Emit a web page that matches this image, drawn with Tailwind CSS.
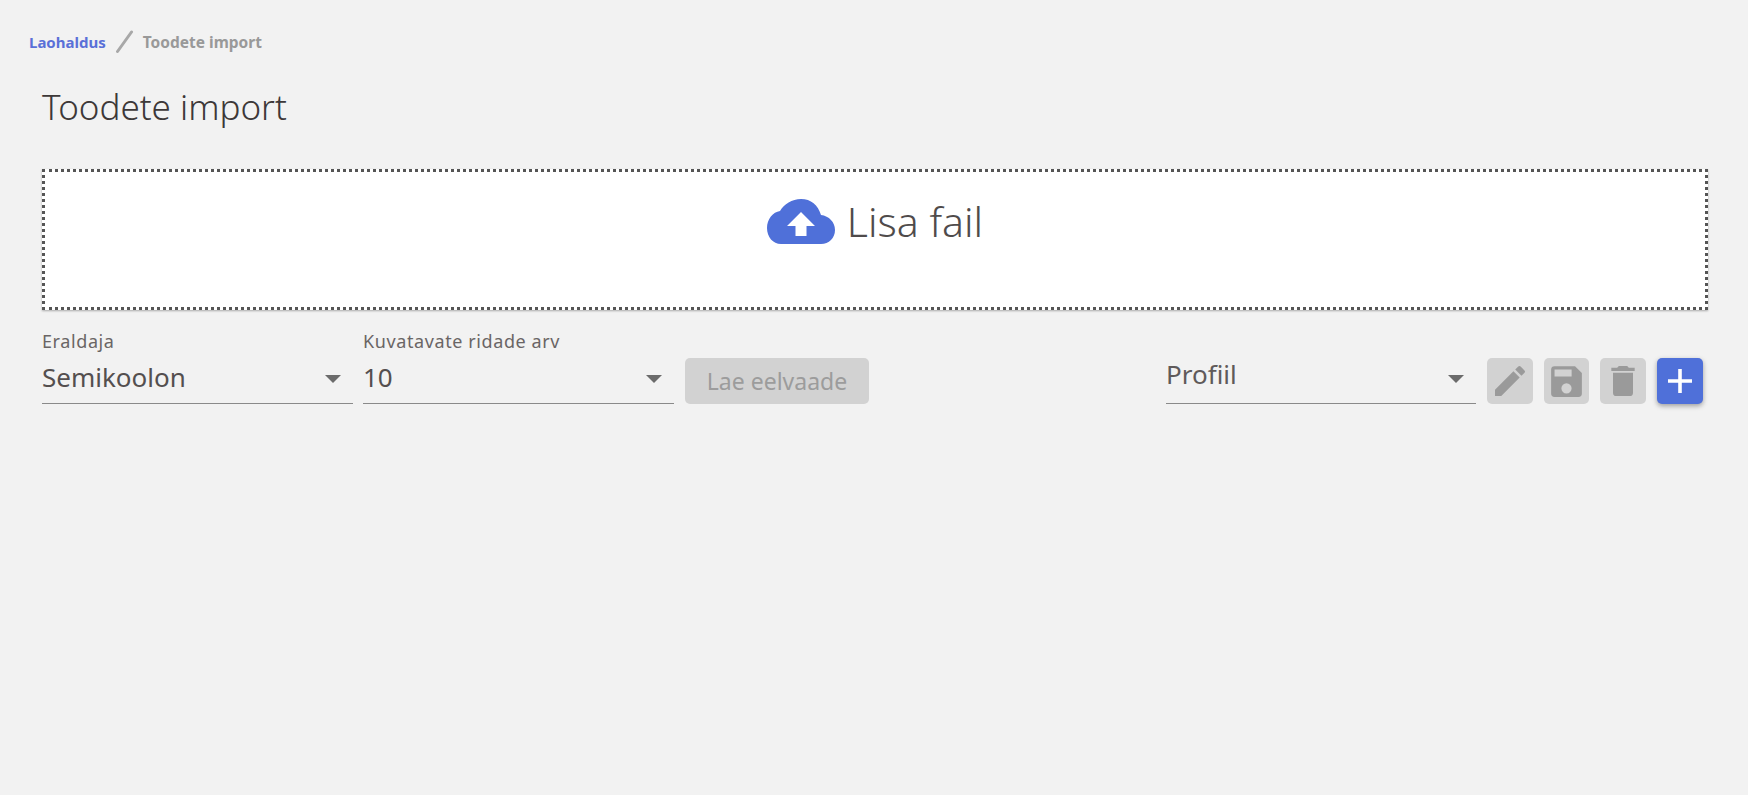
<!DOCTYPE html>
<html lang="et">
  <head>
    <meta charset="UTF-8" />
    <title>Toodete import</title>
    <script src="https://cdn.jsdelivr.net/npm/@tailwindcss/browser@4"></script>
  </head>
  <body class="h-[795px] overflow-hidden bg-[#f2f2f2] font-['Noto_Sans',sans-serif] text-[#544f4f]">
    <!-- Breadcrumb -->
    <nav class="mt-[30px] flex h-[24px] items-center pl-[29px] text-[15px] font-bold">
      <a class="text-[#5a70d8]">Laohaldus</a>
      <svg class="mr-[9px] ml-[10px] h-[24px] w-[18px]" viewBox="0 0 18 24"><path d="M1.500 21.500 L15.500 2" stroke="#a8a8a8" stroke-width="3" stroke-linecap="round" fill="none" /></svg>
      <span class="mt-[2px] text-[15.500px] text-[#999999]">Toodete import</span>
    </nav>

    <main class="pr-[40px] pl-[42px]">
      <h1 class="mt-[24px] h-[58px] text-[35px] leading-[58px] font-light text-[#3d3838]">Toodete import</h1>

      <!-- Upload area -->
      <div class="mt-[33px] flex h-[141px] justify-center border-[3px] border-dotted border-[#555555] bg-white pt-[27px] shadow-[0_1px_2px_rgba(0,0,0,0.3)]">
        <div class="flex h-[45px] items-center gap-[12px]">
          <svg class="h-[45px] w-[68px]" viewBox="0 0 68 45">
            <path fill="#4f70d9" d="M14 45 C6 45 0 38 0 29 C0 20 6 13 13 12 C17 5 25 0 34 0 C44 0 51 6 54 16 C62 17 68 23 68 31 C68 39 62 45 54 45 Z" />
            <path fill="#ffffff" d="M34 13 L48 27 L39.500 27 L39.500 37 L28.500 37 L28.500 27 L20 27 Z" />
          </svg>
          <span class="text-[41px] leading-[45px] font-light text-[#4f4b4b]">Lisa fail</span>
        </div>
      </div>

      <!-- Import options -->
      <div class="mt-[19px] flex items-start pr-[5px]">
        <div class="relative h-[75px] w-[311px] border-b border-[#8a8a8a]">
          <label class="block text-[18px] leading-[24px] tracking-[0.6px] text-[#6a6565]">Eraldaja</label>
          <div class="mt-[7px] text-[26px] leading-[34px]">Semikoolon</div>
          <span class="absolute top-[46px] right-[12px] h-0 w-0 border-x-[8px] border-t-[8px] border-x-transparent border-t-[#6b6b6b]"></span>
        </div>
        <div class="relative ml-[10px] h-[75px] w-[311px] border-b border-[#8a8a8a]">
          <label class="block text-[18px] leading-[24px] tracking-[0.6px] text-[#6a6565]">Kuvatavate ridade arv</label>
          <div class="mt-[7px] text-[26px] leading-[34px]">10</div>
          <span class="absolute top-[46px] right-[12px] h-0 w-0 border-x-[8px] border-t-[8px] border-x-transparent border-t-[#6b6b6b]"></span>
        </div>
        <button class="mt-[29px] ml-[11px] h-[46px] w-[184px] rounded-[5px] bg-[#d2d2d2] text-[23px] text-[#9c9c9c]">Lae eelvaade</button>

        <div class="relative mt-[29px] ml-auto h-[46px] w-[310px] border-b border-[#8a8a8a] text-[26px] leading-[32px] text-[#5f5a5a]">
          Profiil
          <span class="absolute top-[17px] right-[12px] h-0 w-0 border-x-[8px] border-t-[8px] border-x-transparent border-t-[#6b6b6b]"></span>
        </div>
        <button class="mt-[29px] ml-[11px] flex h-[46px] w-[46px] items-center justify-center rounded-[5px] bg-[#d2d2d2]">
          <svg class="h-[40px] w-[40px]" viewBox="0 0 24 24" fill="#9a9a9a"><path d="M3 17.250V21h3.750L17.810 9.940l-3.750-3.750L3 17.250zM20.710 7.040a1 1 0 0 0 0-1.410l-2.340-2.340a1 1 0 0 0-1.410 0l-1.830 1.830 3.750 3.750 1.830-1.830z" /></svg>
        </button>
        <button class="mt-[29px] ml-[11px] flex h-[46px] w-[45px] items-center justify-center rounded-[5px] bg-[#d2d2d2]">
          <svg class="h-[41px] w-[41px]" viewBox="0 0 24 24" fill="#9a9a9a"><path d="M17 3H5a2 2 0 0 0-2 2v14a2 2 0 0 0 2 2h14a2 2 0 0 0 2-2V7l-4-4zm-5 16a3 3 0 1 1 0-6 3 3 0 0 1 0 6zm3-10H5V5h10v4z" /></svg>
        </button>
        <button class="mt-[29px] ml-[11px] flex h-[46px] w-[46px] items-center justify-center rounded-[5px] bg-[#d2d2d2]">
          <svg class="h-[40px] w-[40px]" viewBox="0 0 24 24" fill="#9a9a9a"><path d="M6 19a2 2 0 0 0 2 2h8a2 2 0 0 0 2-2V7H6v12zM19 4h-3.500l-1-1h-5l-1 1H5v2h14V4z" /></svg>
        </button>
        <button class="mt-[29px] ml-[11px] flex h-[46px] w-[46px] items-center justify-center rounded-[5px] bg-[#4f70d9] shadow-[0_2px_5px_rgba(0,0,0,0.35)]">
          <svg class="h-[24px] w-[24px]" viewBox="0 0 24 24" fill="#ffffff"><path d="M10.200 0h3.600v10.200H24v3.600H13.800V24h-3.600V13.800H0v-3.600h10.200z" /></svg>
        </button>
      </div>
    </main>
  </body>
</html>
